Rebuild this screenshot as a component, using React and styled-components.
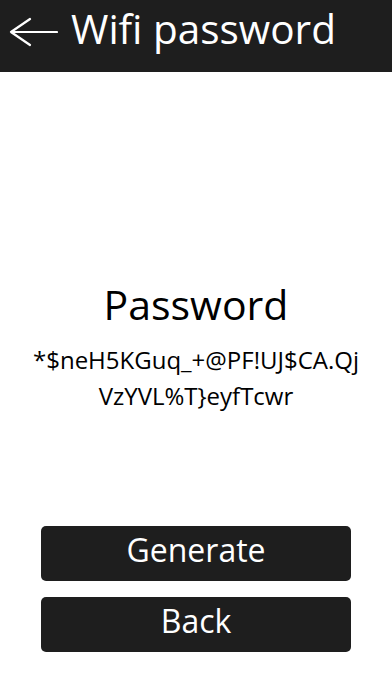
import React from "react";
import styled, { createGlobalStyle } from "styled-components";

const GlobalStyle = createGlobalStyle`
  html, body {
    margin: 0;
    padding: 0;
    background: #fff;
    font-family: "Open Sans", "Noto Sans", sans-serif;
  }
`;

const Page = styled.div`
  width: 392px;
  height: 696px;
  display: flex;
  flex-direction: column;
  background: #fff;
`;

const Header = styled.header`
  height: 72px;
  background: #1e1e1e;
  display: flex;
  align-items: center;
  padding-left: 9px;
  gap: 13px;
  color: #fff;
`;

const Title = styled.h1`
  margin: 0;
  font-size: 40.5px;
  font-weight: 400;
  line-height: 1;
  padding-bottom: 13px;
  white-space: nowrap;
`;

const Content = styled.main`
  flex: 1;
  display: flex;
  flex-direction: column;
  align-items: center;
  padding-top: 205px;
`;

const Heading = styled.h2`
  margin: 0;
  font-size: 41px;
  font-weight: 400;
  line-height: 54px;
  color: #000;
`;

const Secret = styled.p`
  margin: 11px 0 0;
  font-size: 24px;
  line-height: 36px;
  text-align: center;
  color: #000;
`;

const Actions = styled.div`
  margin-top: auto;
  padding: 0 41px 44px;
  display: flex;
  flex-direction: column;
  gap: 16px;
`;

const Button = styled.button`
  height: 55px;
  border: none;
  border-radius: 5px;
  background: #1e1e1e;
  color: #fff;
  font-family: inherit;
  font-size: 32px;
  padding: 0 0 9px;
  cursor: pointer;
`;

const ArrowSvg = styled.svg`
  flex: none;
  margin-bottom: 8px;
`;

const BackArrow = () => (
  <ArrowSvg width="49" height="30" viewBox="0 0 49 30" fill="none">
    <path
      d="M48 15H2M21 2L2 15l19 13"
      stroke="#fff"
      strokeWidth="2.2"
      strokeLinecap="round"
      strokeLinejoin="round"
    />
  </ArrowSvg>
);

export default function App() {
  return (
    <Page>
      <GlobalStyle />
      <Header>
        <BackArrow />
        <Title>Wifi password</Title>
      </Header>
      <Content>
        <Heading>Password</Heading>
        <Secret>
          *$neH5KGuq_+@PF!UJ$CA.Qj
          <br />
          VzYVL%T}eyfTcwr
        </Secret>
      </Content>
      <Actions>
        <Button>Generate</Button>
        <Button>Back</Button>
      </Actions>
    </Page>
  );
}
